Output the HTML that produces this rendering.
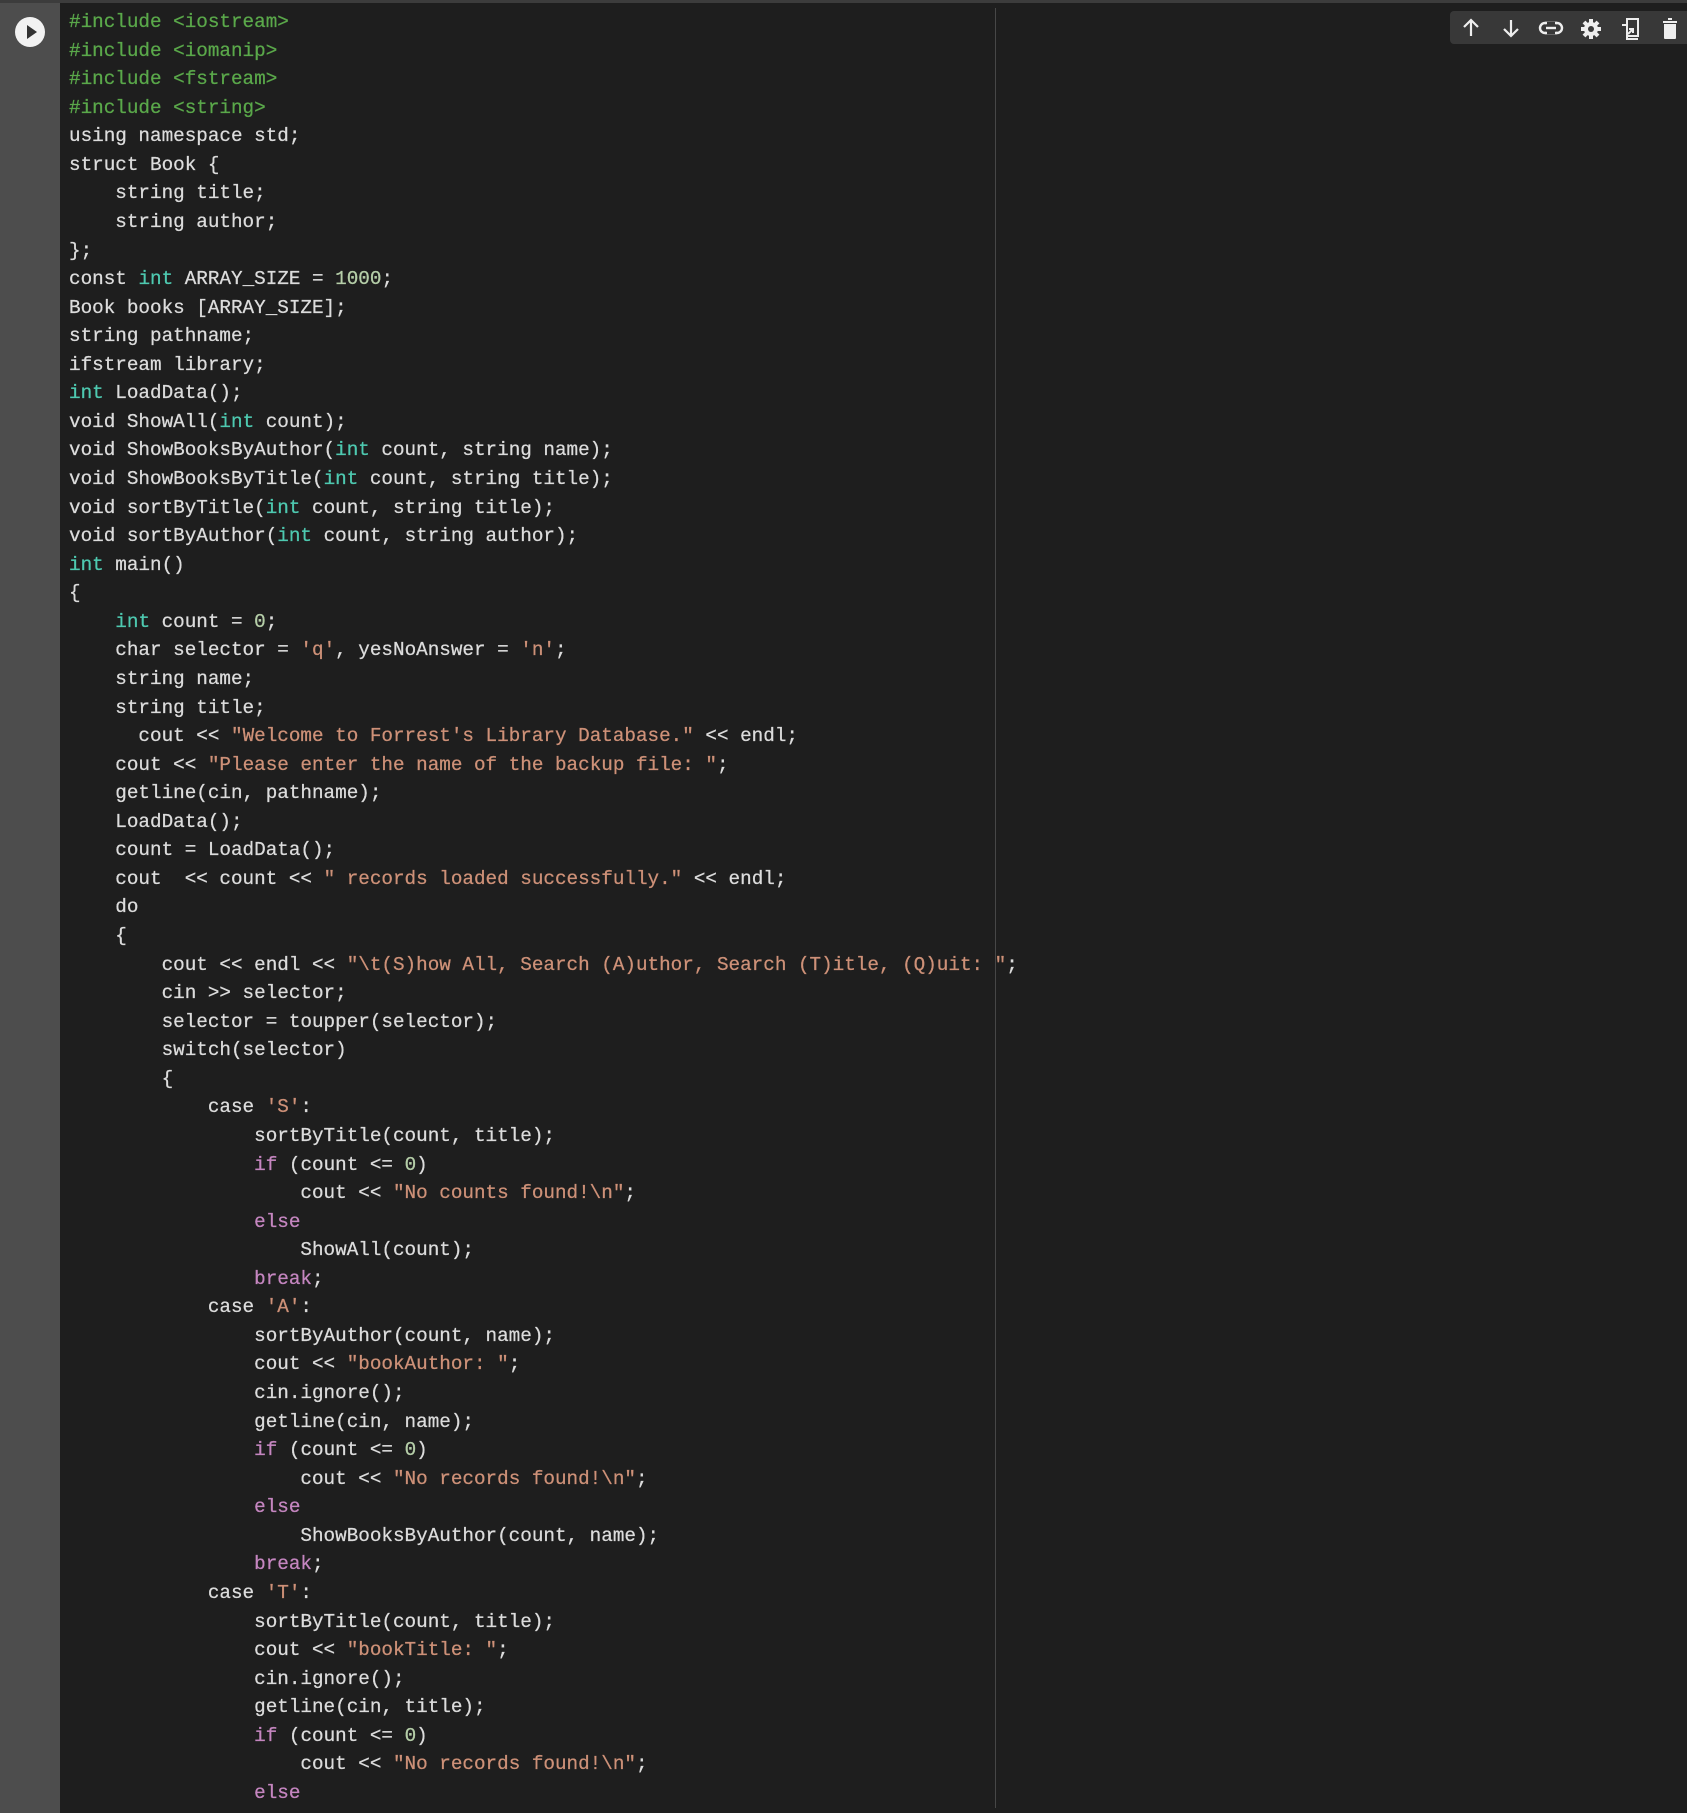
<!DOCTYPE html>
<html><head><meta charset="utf-8"><style>
html,body{margin:0;padding:0;width:1687px;height:1803px;overflow:hidden;background:#1e1e1e}
#top{position:absolute;left:0;top:0;width:1687px;height:3px;background:#3c3c3c}
#gut{position:absolute;left:0;top:3px;width:60px;height:1810px;background:#4d4d4d}
#play{position:absolute;left:15px;top:17px;width:30px;height:30px;border-radius:50%;background:#f2f2f2}
#play:after{content:"";position:absolute;left:12px;top:8px;border-left:10px solid #333;border-top:7px solid transparent;border-bottom:7px solid transparent}
#vl{position:absolute;left:995px;top:8px;width:1px;height:1800px;background:#474747}
pre{position:absolute;left:69px;top:8px;margin:0;font-family:"Liberation Mono",monospace;font-size:19.3px;line-height:28.56px;color:#dcdcdc;-webkit-text-stroke:0.25px #dcdcdc}
.p{color:#5aa84a;-webkit-text-stroke-color:#5aa84a}.k{color:#4ec9b0;-webkit-text-stroke-color:#4ec9b0}.n{color:#b5cea8;-webkit-text-stroke-color:#b5cea8}.s{color:#ce9178;-webkit-text-stroke-color:#ce9178}.c{color:#c586c0;-webkit-text-stroke-color:#c586c0}
#tb{position:absolute;left:1450px;top:11px;width:250px;height:33px;background:#383838;border-radius:4px}
#tb svg{position:absolute;top:6px}
</style></head><body>
<div id="top"></div><div id="gut"></div><div id="play"></div><div id="vl"></div>
<div id="tb">
<svg style="left:10px" width="22" height="22" viewBox="0 0 22 22"><path d="M11 19V4M4 10l7-7 7 7" stroke="#eee" stroke-width="2.2" fill="none"/></svg>
<svg style="left:50px" width="22" height="22" viewBox="0 0 22 22"><path d="M11 3v15M4 12l7 7 7-7" stroke="#eee" stroke-width="2.2" fill="none"/></svg>
<svg style="left:88px" width="26" height="22" viewBox="0 0 26 22"><rect x="2" y="6" width="22" height="10" rx="5" stroke="#eee" stroke-width="2.4" fill="none"/><rect x="8" y="5" width="10" height="12" fill="#383838"/><path d="M8 11h10" stroke="#eee" stroke-width="2.4"/><path d="M9 6H7M9 16H7M17 6h2M17 16h2" stroke="#eee" stroke-width="2.4"/></svg>
<svg style="left:129px" width="24" height="24" viewBox="0 0 24 24"><circle cx="12" cy="12" r="7" fill="#eee"/><g stroke="#eee" stroke-width="4"><path d="M12 2v20M2 12h20M5 5l14 14M19 5L5 19"/></g><circle cx="12" cy="12" r="3" fill="#383838"/></svg>
<svg style="left:169px" width="24" height="24" viewBox="0 0 24 24"><path d="M8 2h11v17H8zM3 8h5v14h11" stroke="#eee" stroke-width="2" fill="none"/><path d="M9 17l5-5M10 12h4v4" stroke="#eee" stroke-width="2" fill="none"/></svg>
<svg style="left:210px" width="20" height="24" viewBox="0 0 20 24"><path d="M3 5h14M8 2h4" stroke="#eee" stroke-width="2"/><path d="M4 7h12v14a1 1 0 0 1-1 1H5a1 1 0 0 1-1-1z" fill="#eee"/></svg>
</div>
<pre><span class="p">#include &lt;iostream&gt;</span>
<span class="p">#include &lt;iomanip&gt;</span>
<span class="p">#include &lt;fstream&gt;</span>
<span class="p">#include &lt;string&gt;</span>
using namespace std;
struct Book {
    string title;
    string author;
};
const <span class="k">int</span> ARRAY_SIZE = <span class="n">1000</span>;
Book books [ARRAY_SIZE];
string pathname;
ifstream library;
<span class="k">int</span> LoadData();
void ShowAll(<span class="k">int</span> count);
void ShowBooksByAuthor(<span class="k">int</span> count, string name);
void ShowBooksByTitle(<span class="k">int</span> count, string title);
void sortByTitle(<span class="k">int</span> count, string title);
void sortByAuthor(<span class="k">int</span> count, string author);
<span class="k">int</span> main()
{
    <span class="k">int</span> count = <span class="n">0</span>;
    char selector = <span class="s">'q'</span>, yesNoAnswer = <span class="s">'n'</span>;
    string name;
    string title;
      cout &lt;&lt; <span class="s">"Welcome to Forrest's Library Database."</span> &lt;&lt; endl;
    cout &lt;&lt; <span class="s">"Please enter the name of the backup file: "</span>;
    getline(cin, pathname);
    LoadData();
    count = LoadData();
    cout  &lt;&lt; count &lt;&lt; <span class="s">" records loaded successfully."</span> &lt;&lt; endl;
    do
    {
        cout &lt;&lt; endl &lt;&lt; <span class="s">"\t(S)how All, Search (A)uthor, Search (T)itle, (Q)uit: "</span>;
        cin &gt;&gt; selector;
        selector = toupper(selector);
        switch(selector)
        {
            case <span class="s">'S'</span>:
                sortByTitle(count, title);
                <span class="c">if</span> (count &lt;= <span class="n">0</span>)
                    cout &lt;&lt; <span class="s">"No counts found!\n"</span>;
                <span class="c">else</span>
                    ShowAll(count);
                <span class="c">break</span>;
            case <span class="s">'A'</span>:
                sortByAuthor(count, name);
                cout &lt;&lt; <span class="s">"bookAuthor: "</span>;
                cin.ignore();
                getline(cin, name);
                <span class="c">if</span> (count &lt;= <span class="n">0</span>)
                    cout &lt;&lt; <span class="s">"No records found!\n"</span>;
                <span class="c">else</span>
                    ShowBooksByAuthor(count, name);
                <span class="c">break</span>;
            case <span class="s">'T'</span>:
                sortByTitle(count, title);
                cout &lt;&lt; <span class="s">"bookTitle: "</span>;
                cin.ignore();
                getline(cin, title);
                <span class="c">if</span> (count &lt;= <span class="n">0</span>)
                    cout &lt;&lt; <span class="s">"No records found!\n"</span>;
                <span class="c">else</span></pre>
</body></html>
